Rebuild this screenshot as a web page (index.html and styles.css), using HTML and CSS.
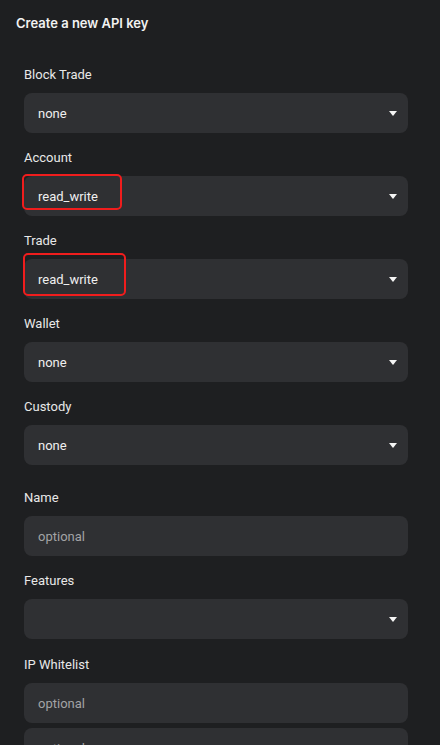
FILE: index.html
```html
<!DOCTYPE html>
<html lang="en">
<head>
<meta charset="utf-8">
<title>Create a new API key</title>
<link rel="stylesheet" href="styles.css">
</head>
<body>
<div class="page">
  <h1 class="title">Create a new API key</h1>
  <form class="form">
    <div class="field">
      <label class="label">Block Trade</label>
      <div class="control select"><span class="value">none</span><span class="caret"></span></div>
    </div>
    <div class="field">
      <label class="label">Account</label>
      <div class="control select"><span class="value">read_write</span><span class="caret"></span><span class="mark"></span></div>
    </div>
    <div class="field">
      <label class="label">Trade</label>
      <div class="control select"><span class="value">read_write</span><span class="caret"></span><span class="mark mark-trade"></span></div>
    </div>
    <div class="field">
      <label class="label">Wallet</label>
      <div class="control select"><span class="value">none</span><span class="caret"></span></div>
    </div>
    <div class="field">
      <label class="label">Custody</label>
      <div class="control select"><span class="value">none</span><span class="caret"></span></div>
    </div>
    <div class="field field-gap">
      <label class="label">Name</label>
      <div class="control"><span class="placeholder">optional</span></div>
    </div>
    <div class="field">
      <label class="label">Features</label>
      <div class="control select"><span class="value"></span><span class="caret"></span></div>
    </div>
    <div class="field field-ip">
      <label class="label">IP Whitelist</label>
      <div class="stack">
        <div class="control"><span class="placeholder">optional</span></div>
        <div class="control"><span class="placeholder">optional</span></div>
      </div>
    </div>
  </form>
</div>
</body>
</html>
```
FILE: styles.css
```css
* { box-sizing: border-box; }
html, body {
  margin: 0;
  padding: 0;
  background: #1e1f21;
}
body {
  font-family: Roboto, "Noto Sans", sans-serif;
  color: #e6e6e6;
  overflow: hidden;
  height: 745px;
}
.page {
  padding: 14px 32px 0 24px;
}
.title {
  margin: 0 0 0 -8px;
  font-family: Inter, "Noto Sans", sans-serif;
  font-size: 13px;
  line-height: 18px;
  font-weight: 600;
  color: #f2f2f2;
}
.form {
  margin-top: 32px;
  display: flex;
  flex-direction: column;
  gap: 14px;
}
.field {
  display: flex;
  flex-direction: column;
  gap: 8px;
}
.field-gap { margin-top: 8px; }
.field-ip { margin-top: 1px; }
.label {
  padding-top: 1px;
  font-size: 13px;
  line-height: 20px;
  color: #e8e8e8;
}
.stack {
  display: flex;
  flex-direction: column;
  gap: 5px;
}
.control {
  position: relative;
  height: 40px;
  border-radius: 8px;
  background: #2f3033;
  display: flex;
  align-items: center;
  padding: 0 14px;
  font-size: 13px;
}
.value { color: #efefef; }
.placeholder { color: #a2a3a5; }
.caret {
  margin-left: auto;
  margin-right: -3px;
  width: 0;
  height: 0;
  border-left: 4px solid transparent;
  border-right: 4px solid transparent;
  border-top: 5px solid #f5f5f5;
}
.mark {
  position: absolute;
  left: -2px;
  top: -2px;
  width: 100px;
  height: 36px;
  border: 2px solid #f01d1d;
  border-radius: 5px;
}
.mark-trade {
  left: -1px;
  top: -6px;
  width: 103px;
  height: 43px;
}
```
